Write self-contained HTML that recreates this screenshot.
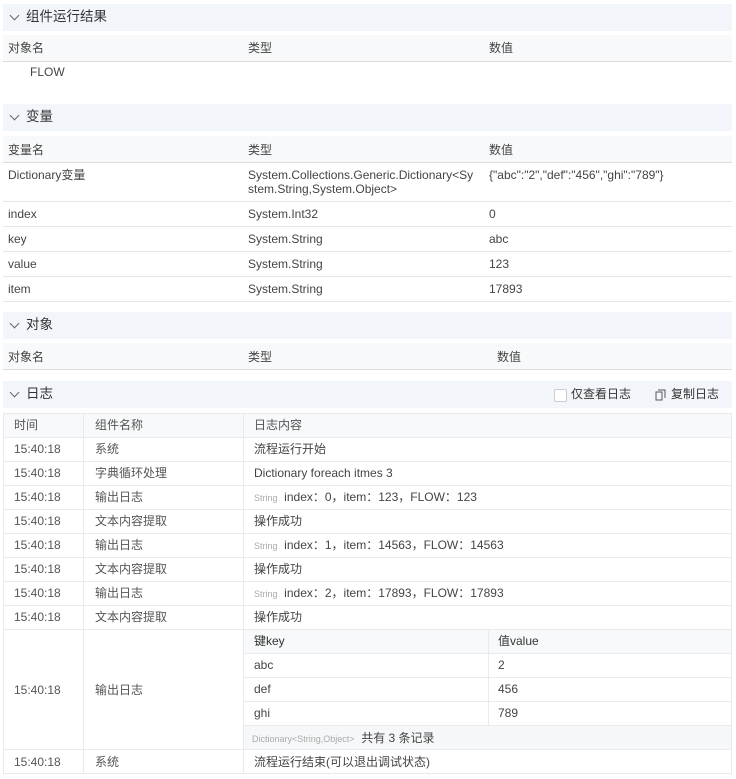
<html><head><style>
body{margin:0;width:736px;height:779px;background:#fff;font-family:"Liberation Sans","Noto Sans CJK SC",sans-serif;font-size:12px;color:#444;position:relative;overflow:hidden}
.a{position:absolute;white-space:nowrap;line-height:14px}
.hd{position:absolute;left:3px;width:729px;height:27px;background:#f2f5fa}
.hd span{position:absolute;left:23px;top:5px;font-size:13.5px;color:#333;line-height:16px}
.hd i{position:absolute;left:8px;top:8px;width:6px;height:6px;border-right:1px solid #666;border-bottom:1px solid #666;transform:rotate(45deg)}
.th{position:absolute;left:3px;width:729px;height:26px;background:#f8f9fa;border-bottom:1px solid #ddd}
.row{position:absolute;left:3px;width:729px;border-bottom:1px solid #e4e6ea}
.lt{position:absolute;border:1px solid #e8eaee;box-sizing:border-box}
.c{color:#555}
.s{font-size:9px;color:#aaa}
</style></head><body>
<div class="hd" style="top:4px"><i></i><span>组件运行结果</span></div>
<div class="th" style="top:35px"></div>
<div class="a" style="left:8px;top:41px">对象名</div><div class="a" style="left:248px;top:41px">类型</div><div class="a" style="left:489px;top:41px">数值</div>
<div class="a" style="left:30px;top:65px">FLOW</div>

<div class="hd" style="top:104px"><i></i><span>变量</span></div>
<div class="th" style="top:136px"></div>
<div class="a" style="left:8px;top:143px">变量名</div><div class="a" style="left:248px;top:143px">类型</div><div class="a" style="left:489px;top:143px">数值</div>
<div class="row" style="top:163px;height:38px"></div>
<div class="a" style="left:8px;top:168px">Dictionary变量</div>
<div class="a" style="left:248px;top:168px;line-height:14px">System.Collections.Generic.Dictionary&lt;Sy<br>stem.String,System.Object&gt;</div>
<div class="a" style="left:489px;top:168px">{"abc":"2","def":"456","ghi":"789"}</div>
<div class="row" style="top:202px;height:24px"></div>
<div class="a" style="left:8px;top:207px">index</div><div class="a" style="left:248px;top:207px">System.Int32</div><div class="a" style="left:489px;top:207px">0</div>
<div class="row" style="top:227px;height:24px"></div>
<div class="a" style="left:8px;top:232px">key</div><div class="a" style="left:248px;top:232px">System.String</div><div class="a" style="left:489px;top:232px">abc</div>
<div class="row" style="top:252px;height:24px"></div>
<div class="a" style="left:8px;top:257px">value</div><div class="a" style="left:248px;top:257px">System.String</div><div class="a" style="left:489px;top:257px">123</div>
<div class="row" style="top:277px;height:24px"></div>
<div class="a" style="left:8px;top:282px">item</div><div class="a" style="left:248px;top:282px">System.String</div><div class="a" style="left:489px;top:282px">17893</div>

<div class="hd" style="top:312px"><i></i><span>对象</span></div>
<div class="th" style="top:343px"></div>
<div class="a" style="left:8px;top:350px">对象名</div><div class="a" style="left:248px;top:350px">类型</div><div class="a" style="left:497px;top:350px">数值</div>

<div class="hd" style="top:381px"><i></i><span>日志</span>
<div class="a" style="left:551px;top:8px;width:11px;height:11px;border:1px solid #ccc;border-radius:2px;background:#fff"></div>
<div class="a" style="left:568px;top:6px;color:#333">仅查看日志</div>
<svg class="a" style="left:652px;top:8px" width="11" height="12" viewBox="0 0 11 12"><path d="M3 1h7v8M1 3h6v8H1z" fill="none" stroke="#555"/></svg>
<div class="a" style="left:668px;top:6px;color:#333">复制日志</div></div>

<div class="lt" style="left:3px;top:413px;width:729px;height:361px"></div>
<div class="a" style="left:4px;top:414px;width:727px;height:23px;background:#f8f9fa"></div>
<div class="a" style="left:83px;top:413px;width:1px;height:361px;background:#e8eaee"></div>
<div class="a" style="left:243px;top:413px;width:1px;height:361px;background:#e8eaee"></div>
<div class="a c" style="left:14px;top:418px">时间</div><div class="a c" style="left:95px;top:418px">组件名称</div><div class="a c" style="left:254px;top:418px">日志内容</div>

<div class="a" style="left:3px;top:437px;width:729px;height:1px;background:#e8eaee"></div>
<div class="a c" style="left:14px;top:442px">15:40:18</div><div class="a c" style="left:95px;top:442px">系统</div><div class="a" style="left:254px;top:442px">流程运行开始</div>
<div class="a" style="left:3px;top:461px;width:729px;height:1px;background:#e8eaee"></div>
<div class="a c" style="left:14px;top:466px">15:40:18</div><div class="a c" style="left:95px;top:466px">字典循环处理</div><div class="a" style="left:254px;top:466px">Dictionary foreach itmes 3</div>
<div class="a" style="left:3px;top:485px;width:729px;height:1px;background:#e8eaee"></div>
<div class="a c" style="left:14px;top:490px">15:40:18</div><div class="a c" style="left:95px;top:490px">输出日志</div><div class="a" style="left:254px;top:490px"><span class="s">String</span>&nbsp; index：0，item：123，FLOW：123</div>
<div class="a" style="left:3px;top:509px;width:729px;height:1px;background:#e8eaee"></div>
<div class="a c" style="left:14px;top:514px">15:40:18</div><div class="a c" style="left:95px;top:514px">文本内容提取</div><div class="a" style="left:254px;top:514px">操作成功</div>
<div class="a" style="left:3px;top:533px;width:729px;height:1px;background:#e8eaee"></div>
<div class="a c" style="left:14px;top:538px">15:40:18</div><div class="a c" style="left:95px;top:538px">输出日志</div><div class="a" style="left:254px;top:538px"><span class="s">String</span>&nbsp; index：1，item：14563，FLOW：14563</div>
<div class="a" style="left:3px;top:557px;width:729px;height:1px;background:#e8eaee"></div>
<div class="a c" style="left:14px;top:562px">15:40:18</div><div class="a c" style="left:95px;top:562px">文本内容提取</div><div class="a" style="left:254px;top:562px">操作成功</div>
<div class="a" style="left:3px;top:581px;width:729px;height:1px;background:#e8eaee"></div>
<div class="a c" style="left:14px;top:586px">15:40:18</div><div class="a c" style="left:95px;top:586px">输出日志</div><div class="a" style="left:254px;top:586px"><span class="s">String</span>&nbsp; index：2，item：17893，FLOW：17893</div>
<div class="a" style="left:3px;top:605px;width:729px;height:1px;background:#e8eaee"></div>
<div class="a c" style="left:14px;top:610px">15:40:18</div><div class="a c" style="left:95px;top:610px">文本内容提取</div><div class="a" style="left:254px;top:610px">操作成功</div>
<div class="a" style="left:3px;top:629px;width:729px;height:1px;background:#e8eaee"></div>
<div class="a" style="left:244px;top:630px;width:487px;height:23px;background:#f8f9fa"></div>
<div class="a" style="left:244px;top:725px;width:487px;height:24px;background:#f6f7f9"></div>
<div class="a" style="left:488px;top:629px;width:1px;height:96px;background:#e8eaee"></div>
<div class="a" style="left:243px;top:653px;width:489px;height:1px;background:#e8eaee"></div>
<div class="a" style="left:243px;top:677px;width:489px;height:1px;background:#e8eaee"></div>
<div class="a" style="left:243px;top:701px;width:489px;height:1px;background:#e8eaee"></div>
<div class="a" style="left:243px;top:725px;width:489px;height:1px;background:#e8eaee"></div>
<div class="a" style="left:254px;top:634px;color:#333">键key</div><div class="a" style="left:498px;top:634px;color:#333">值value</div>
<div class="a" style="left:254px;top:658px">abc</div><div class="a" style="left:498px;top:658px">2</div>
<div class="a" style="left:254px;top:682px">def</div><div class="a" style="left:498px;top:682px">456</div>
<div class="a" style="left:254px;top:706px">ghi</div><div class="a" style="left:498px;top:706px">789</div>
<div class="a" style="left:252px;top:731px"><span class="s">Dictionary&lt;String,Object&gt;</span>&nbsp; 共有 3 条记录</div>
<div class="a c" style="left:14px;top:683px">15:40:18</div><div class="a c" style="left:95px;top:683px">输出日志</div>
<div class="a" style="left:3px;top:749px;width:729px;height:1px;background:#e8eaee"></div>
<div class="a c" style="left:14px;top:755px">15:40:18</div><div class="a c" style="left:95px;top:755px">系统</div><div class="a" style="left:254px;top:755px">流程运行结束(可以退出调试状态)</div>
</body></html>
